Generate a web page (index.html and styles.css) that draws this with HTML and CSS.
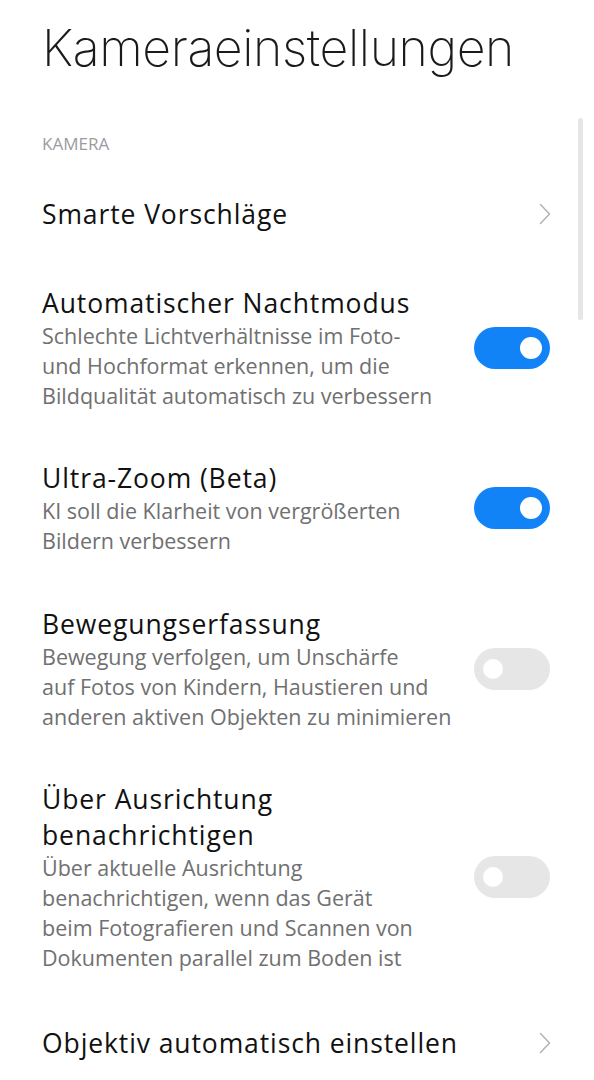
FILE: index.html
```html
<!DOCTYPE html>
<html lang="de">
<head>
    <meta charset="UTF-8">
    <meta name="viewport" content="width=device-width, initial-scale=1.0">
    <title>Kameraeinstellungen</title>
    <link rel="stylesheet" href="styles.css">
</head>
<body>
    <div class="screen">
        <h1 class="page-title">Kameraeinstellungen</h1>

        <div class="section-label">KAMERA</div>

        <div class="item item-nav">
            <div class="item-text">
                <div class="item-title">Smarte Vorschläge</div>
            </div>
            <svg class="chevron" width="12" height="22" viewBox="0 0 12 22"><polyline points="1.5,1.5 10.5,11 1.5,20.5" fill="none" stroke="#b2b2b2" stroke-width="1.5" stroke-linecap="round" stroke-linejoin="round"/></svg>
        </div>

        <div class="item">
            <div class="item-text">
                <div class="item-title">Automatischer Nachtmodus</div>
                <div class="item-desc">Schlechte Lichtverhältnisse im Foto-<br>und Hochformat erkennen, um die<br>Bildqualität automatisch zu verbessern</div>
            </div>
            <span class="switch on"></span>
        </div>

        <div class="item">
            <div class="item-text">
                <div class="item-title">Ultra-Zoom (Beta)</div>
                <div class="item-desc">KI soll die Klarheit von vergrößerten<br>Bildern verbessern</div>
            </div>
            <span class="switch on"></span>
        </div>

        <div class="item">
            <div class="item-text">
                <div class="item-title">Bewegungserfassung</div>
                <div class="item-desc">Bewegung verfolgen, um Unschärfe<br>auf Fotos von Kindern, Haustieren und<br>anderen aktiven Objekten zu minimieren</div>
            </div>
            <span class="switch"></span>
        </div>

        <div class="item">
            <div class="item-text">
                <div class="item-title">Über Ausrichtung<br>benachrichtigen</div>
                <div class="item-desc">Über aktuelle Ausrichtung<br>benachrichtigen, wenn das Gerät<br>beim Fotografieren und Scannen von<br>Dokumenten parallel zum Boden ist</div>
            </div>
            <span class="switch"></span>
        </div>

        <div class="item item-nav">
            <div class="item-text">
                <div class="item-title">Objektiv automatisch einstellen</div>
            </div>
            <svg class="chevron" width="12" height="22" viewBox="0 0 12 22"><polyline points="1.5,1.5 10.5,11 1.5,20.5" fill="none" stroke="#b2b2b2" stroke-width="1.5" stroke-linecap="round" stroke-linejoin="round"/></svg>
        </div>

        <div class="scrollbar"></div>
    </div>
</body>
</html>
```

FILE: styles.css
```css
body {
    margin: 0;
    background-color: #ffffff;
    font-family: "Open Sans", Roboto, sans-serif;
    color: #111111;
}

.screen {
    position: relative;
    height: 1080px;
    overflow: hidden;
    padding: 0 43px 0 42px;
}

.page-title {
    margin: 0;
    padding-top: 16px;
    font-family: Inter, Roboto, sans-serif;
    font-size: 50px;
    line-height: 64px;
    font-weight: 200;
    color: #1a1a1a;
    letter-spacing: -0.4px;
}

.section-label {
    margin-top: 53px;
    margin-bottom: 14px;
    font-size: 17px;
    line-height: 22px;
    color: #9b9ba0;
}

.item {
    display: flex;
    align-items: center;
    justify-content: space-between;
    padding: 25px 0;
}

.item-nav {
    padding: 27px 0 28px;
}

.item-title {
    font-size: 26.5px;
    line-height: 36px;
    letter-spacing: 0.9px;
    color: #111111;
}

.item-desc {
    font-size: 21.5px;
    line-height: 29.8px;
    color: #707070;
}

/* Chevron for sub pages */
.chevron {
    flex: none;
}

/* Toggle switches */
.switch {
    position: relative;
    flex: none;
    width: 76px;
    height: 42px;
    margin-right: 1px;
    border-radius: 21px;
    background-color: #e6e6e6;
}

.switch::after {
    content: "";
    position: absolute;
    top: 11px;
    left: 9px;
    width: 20px;
    height: 20px;
    border-radius: 50%;
    background-color: #ffffff;
}

.switch.on {
    background-color: #1283f7;
}

.switch.on::after {
    left: auto;
    right: 8px;
    top: 10px;
    width: 22px;
    height: 22px;
}

.scrollbar {
    position: absolute;
    top: 118px;
    right: 11px;
    width: 5px;
    height: 202px;
    border-radius: 3px;
    background-color: #e6e6e6;
}
```
